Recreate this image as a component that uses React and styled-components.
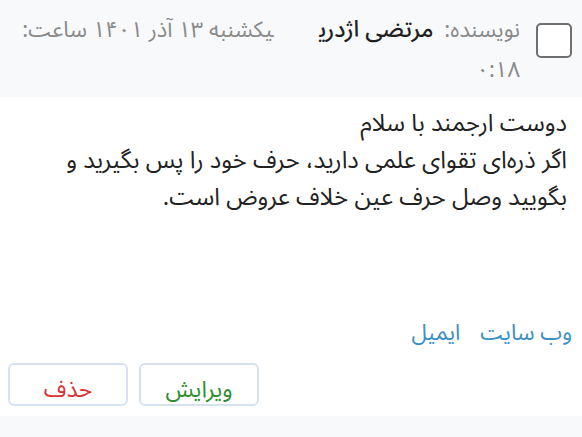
import styled, { createGlobalStyle } from 'styled-components'

const GlobalStyle = createGlobalStyle`
    html, body {
        margin: 0;
        padding: 0;
        background: #ffffff;
        overflow: hidden;
    }
    body {
        font-family: "Noto Sans Arabic", "DejaVu Sans", "Noto Sans", sans-serif;
    }
`

const Page = styled.div`
    direction: rtl;
    width: 582px;
    height: 437px;
    overflow: hidden;
`

const Header = styled.div`
    display: flex;
    align-items: flex-start;
    gap: 16px;
    background: #f8f9fb;
    padding: 23px 10px 0 18px;
    height: ${p => p.$height || '74px'};
    box-sizing: content-box;
`

const Check = styled.span`
    flex: none;
    width: 32px;
    height: 31px;
    border: 2px solid #6f6f6f;
    border-radius: 5px;
    background: #fff;
`

const Meta = styled.div`
    font-size: 22px;
    line-height: 40px;
    color: #8a8a8a;
    margin-top: -13px;
`

const Author = styled.span`
    color: #1f1f1f;
    font-weight: 500;
    font-size: 23px;
    margin-inline-start: 11px;
    margin-inline-end: 46px;
`

const Body = styled.div`
    padding: 8px 15px 10px 14px;
    height: 319px;
    box-sizing: border-box;
    display: flex;
    flex-direction: column;
`

const Text = styled.p`
    margin: 0;
    font-size: 24px;
    line-height: 37px;
    color: #222;
`

const Links = styled.div`
    display: flex;
    gap: 20px;
    margin-top: auto;
    margin-right: -5px;
    font-size: 22px;
    line-height: 30px;
`

const Link = styled.a`
    color: #3a8fc4;
    text-decoration: none;
`

const Actions = styled.div`
    display: flex;
    gap: 11px;
    direction: ltr;
    margin: 15px 0 0 -6px;
`

const Button = styled.button`
    width: 120px;
    height: 43px;
    padding: 0;
    border: 2px solid #d7e2f1;
    border-radius: 6px;
    background: #fff;
    font-family: inherit;
    font-size: 23px;
    color: ${p => p.$color};
    direction: rtl;
`

const NextName = styled.div`
    color: #3a8fc4;
    font-size: 22px;
    line-height: 40px;
    margin-top: -13px;
`

export default function App() {
    return (
        <Page>
            <GlobalStyle />
            <Header>
                <Check />
                <Meta>
                    نویسنده:<Author>مرتضی اژدری</Author>یکشنبه ۱۳ آذر ۱۴۰۱ ساعت: ۰:۱۸
                </Meta>
            </Header>
            <Body>
                <Text>
                    دوست ارجمند با سلام
                    <br />
                    اگر ذره‌ای تقوای علمی دارید، حرف خود را پس بگیرید و بگویید وصل حرف عین خلاف عروض است.
                </Text>
                <Links>
                    <Link href="#">وب سایت</Link>
                    <Link href="#">ایمیل</Link>
                </Links>
                <Actions>
                    <Button $color="#d83535">حذف</Button>
                    <Button $color="#2f8f2f">ویرایش</Button>
                </Actions>
            </Body>
            <Header $height="60px">
                <Check />
                <NextName>نویسنده: علی</NextName>
            </Header>
        </Page>
    )
}
